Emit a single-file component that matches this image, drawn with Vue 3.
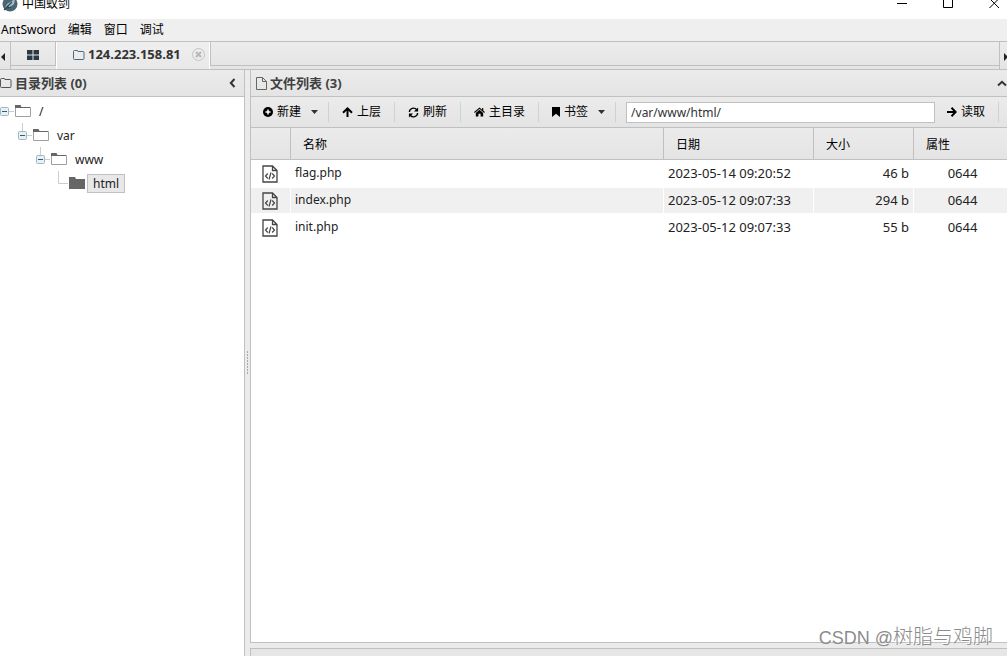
<script setup>
import { ref } from 'vue'

const menus = ['AntSword', '编辑', '窗口', '调试']
const tree = [
  { name: '/', level: 0 },
  { name: 'var', level: 1 },
  { name: 'www', level: 2 },
  { name: 'html', level: 3, leaf: true },
]
const files = [
  { name: 'flag.php', date: '2023-05-14 09:20:52', size: '46 b', attr: '0644' },
  { name: 'index.php', date: '2023-05-12 09:07:33', size: '294 b', attr: '0644' },
  { name: 'init.php', date: '2023-05-12 09:07:33', size: '55 b', attr: '0644' },
]
const path = ref('/var/www/html/')
</script>

<template>
  <div class="window">
    <header class="titlebar">
      <svg class="logo" width="16" height="16" viewBox="0 0 16 16">
        <circle cx="8" cy="8" r="7.5" fill="#4b6673" />
        <path d="M3 12 5 8 10 5 13 3 12 8 8 11z" fill="#a9c0ca" />
        <path d="M2 14 10 6M6 9v3l3-1" stroke="#2c4450" stroke-width="1.2" fill="none" />
      </svg>
      <span class="app-name">中国蚁剑</span>
      <button class="win-btn" aria-label="最小化">
        <svg width="11" height="11" viewBox="0 0 11 11"><path d="M0 5.5h10" stroke="#000" /></svg>
      </button>
      <button class="win-btn" aria-label="最大化">
        <svg width="11" height="11" viewBox="0 0 11 11"><path d="M.5.5h9v9h-9z" stroke="#000" fill="none" /></svg>
      </button>
      <button class="win-btn" aria-label="关闭">
        <svg width="11" height="11" viewBox="0 0 11 11"><path d="M.5.5l9.500 9.500M10 .5.5 10" stroke="#000" fill="none" /></svg>
      </button>
    </header>

    <nav class="menubar">
      <button v-for="m in menus" :key="m">{{ m }}</button>
    </nav>

    <div class="tabs">
      <button class="scroll left" aria-label="向左">
        <svg width="5" height="8" viewBox="0 0 5 8"><path d="M5 0v8L1 4z" fill="#222" /></svg>
      </button>
      <button class="tab home" aria-label="首页">
        <svg width="12" height="10" viewBox="0 0 12 10">
          <path d="M0 0h5.500v4.500H0zM6.500 0H12v4.500H6.500zM0 5.500h5.500V10H0zM6.500 5.500H12V10H6.500z" fill="#2b3a42" />
        </svg>
      </button>
      <div class="tab active">
        <svg width="12" height="10" viewBox="0 0 12 10">
          <path d="M.5 8.500v-7q0-1 1-1h2.500q1 0 1 1h5q1 0 1 1v6q0 1-1 1h-8.500q-1 0-1-1z" stroke="#46697f" fill="none" />
        </svg>
        <span class="tab-label">124.223.158.81</span>
        <button class="close" aria-label="关闭标签">
          <svg width="13" height="13" viewBox="0 0 13 13">
            <circle cx="6.500" cy="6.500" r="6" stroke="#c2c2c2" fill="none" />
            <path d="M4 4l5 5M9 4 4 9" stroke="#b8b8b8" stroke-width="2" />
          </svg>
        </button>
      </div>
      <div class="tab-space"></div>
      <button class="scroll right" aria-label="向右">
        <svg width="3" height="8" viewBox="0 0 3 8"><path d="M0 0v8l3-3V3z" fill="#222" /></svg>
      </button>
    </div>

    <main class="panes">
      <section class="side">
        <div class="pane-head">
          <svg width="12" height="10" viewBox="0 0 12 10">
            <path d="M.5 8.500v-7q0-1 1-1h2.500q1 0 1 1h5q1 0 1 1v6q0 1-1 1h-8.500q-1 0-1-1z" stroke="#555" fill="none" />
          </svg>
          <h2>目录列表 (0)</h2>
          <button class="fold" aria-label="折叠">
            <svg width="7" height="10" viewBox="0 0 7 10"><path d="M5.500 1 1.800 5l3.700 4" stroke="#333" stroke-width="2" fill="none" /></svg>
          </button>
        </div>
        <ul class="tree">
          <li v-for="n in tree" :key="n.name" :class="'level-' + n.level">
            <svg v-if="!n.leaf" class="toggle" width="14" height="24" viewBox="0 0 14 24">
              <path v-if="n.level" d="M4.500 0v8" stroke="#ccc" />
              <path d="M9 12.500h5" stroke="#ccc" />
              <rect x=".5" y="8.500" width="8" height="8" rx="1" fill="#e9f0f4" stroke="#9db8c6" />
              <path d="M2 12.500h5" stroke="#355a70" />
            </svg>
            <svg v-else class="toggle" width="14" height="24" viewBox="0 0 14 24">
              <path d="M4.500 0v12.500H14" stroke="#ccc" fill="none" />
            </svg>
            <svg class="folder" width="16" height="12" viewBox="0 0 16 12">
              <template v-if="n.leaf"><path d="M0 0h6l1 2h9v10H0z" fill="#666" /></template>
              <template v-else>
                <path d="M.5 11.500v-9h15v9z" fill="#fff" stroke="#a0a0a0" />
                <path d="M0 0h5.500l1 2H15v1H0z" fill="#666" />
              </template>
            </svg>
            <span class="node" :class="{ selected: n.leaf }">{{ n.name }}</span>
          </li>
        </ul>
      </section>

      <div class="splitter">
        <svg width="2" height="24" viewBox="0 0 2 24"><path d="M.5 0v24" stroke="#aaa" stroke-dasharray="2 1" /></svg>
      </div>

      <div class="content">
        <section class="files">
          <div class="pane-head">
            <svg width="11" height="13" viewBox="0 0 11 13">
              <path d="M.5.5h6l4 4v8H.5zM6.500.5v4h4" stroke="#666" fill="none" />
            </svg>
            <h2>文件列表 (3)</h2>
            <button class="fold" aria-label="收起">
              <svg width="10" height="7" viewBox="0 0 10 7"><path d="M1 5.500 5 1.800l4 3.700" stroke="#333" stroke-width="2" fill="none" /></svg>
            </button>
          </div>

          <div class="toolbar">
            <button class="tool new">
              <svg width="10" height="10" viewBox="0 0 10 10"><circle cx="5" cy="5" r="5" /><path d="M5 2.500v5M2.500 5h5" stroke="#fff" stroke-width="1.500" /></svg>
              新建
              <svg class="caret" width="7" height="4" viewBox="0 0 7 4"><path d="M0 0h7L3.500 4z" fill="#333" /></svg>
            </button>
            <button class="tool up">
              <svg width="11" height="10" viewBox="0 0 11 10"><path d="M5.500 10V1.500M1 5.700l4.500-4.300L10 5.700" stroke="#000" stroke-width="2" fill="none" /></svg>
              上层
            </button>
            <button class="tool refresh">
              <svg width="11" height="11" viewBox="0 0 12 12">
                <path d="M1.500 5.500A4.500 4.500 0 0 1 9.500 3M10.500 6.500A4.500 4.500 0 0 1 2.500 9" stroke="#000" stroke-width="1.500" fill="none" />
                <path d="M11 .5V5H6.500zM1 11.500V7h4.500z" />
              </svg>
              刷新
            </button>
            <button class="tool main-dir">
              <svg width="11" height="10" viewBox="0 0 12 10"><path d="M6 2.600 10 6v4H7.200V7H4.800v3H2V6z" /><path d="M.5 5.500 6 .8l5.500 4.700M9.500.5v3" stroke="#000" stroke-width="1.200" fill="none" /></svg>
              主目录
            </button>
            <button class="tool bookmark">
              <svg width="8" height="10" viewBox="0 0 8 10"><path d="M0 0h8v10L4 6.800 0 10z" /></svg>
              书签
              <svg class="caret" width="7" height="4" viewBox="0 0 7 4"><path d="M0 0h7L3.500 4z" fill="#333" /></svg>
            </button>
            <input v-model="path" class="path" type="text" aria-label="路径" />
            <button class="tool read">
              <svg width="10" height="10" viewBox="0 0 10 10"><path d="M0 5h8.500M4.500.8 8.600 5 4.500 9.200" stroke="#000" stroke-width="2" fill="none" /></svg>
              读取
            </button>
          </div>

          <table>
            <colgroup>
              <col class="c-icon" /><col /><col class="c-date" /><col class="c-size" /><col class="c-attr" />
            </colgroup>
            <thead>
              <tr><th></th><th>名称</th><th>日期</th><th>大小</th><th>属性</th></tr>
            </thead>
            <tbody>
              <tr v-for="f in files" :key="f.name">
                <td class="icon">
                  <svg width="16" height="18" viewBox="0 0 16 18">
                    <path d="M1 1h9.500L15 5.500V17H1zM10.500 1v4.500H15" stroke="#444" stroke-width="1.300" fill="none" />
                    <path d="M5.800 8.500 3.500 11l2.300 2.500M10.200 8.500l2.300 2.500-2.300 2.500M9 7.500l-2 7" stroke="#444" stroke-width="1.200" fill="none" />
                  </svg>
                </td>
                <td class="name">{{ f.name }}</td>
                <td>{{ f.date }}</td>
                <td class="size">{{ f.size }}</td>
                <td class="attr">{{ f.attr }}</td>
              </tr>
            </tbody>
          </table>
        </section>
        <section class="tasks"></section>
      </div>
    </main>
    <div class="watermark"><span class="site">CSDN @</span>树脂与鸡脚</div>
  </div>
</template>

<style>
body {
  margin: 0;
  overflow: hidden;
}
</style>

<style scoped>
.window {
  position: relative;
  display: flex;
  flex-direction: column;
  height: 100vh;
  overflow: hidden;
  background: #ebebeb;
  color: #222;
  font: 13px/20px "Noto Sans", "Noto Sans CJK SC", sans-serif;
}
button {
  display: flex;
  align-items: center;
  padding: 0;
  border: 0;
  background: none;
  color: #000;
  font: inherit;
  font-size: 12px;
  white-space: nowrap;
}
svg {
  flex: none;
  display: block;
}
.titlebar {
  display: flex;
  flex: none;
  align-items: center;
  height: 31px;
  margin-top: -12px;
  padding-left: 2px;
  background: #fff;
  color: #000;
  font-size: 12px;
}
.app-name {
  margin-left: 4px;
  margin-right: auto;
}
.win-btn {
  justify-content: center;
  width: 46px;
  height: 30px;
}
.win-btn:last-child {
  margin-right: -10px;
}
.menubar {
  display: flex;
  flex: none;
  gap: 12px;
  height: 22px;
  padding-left: 1px;
  background: #efefef;
}
.tabs {
  display: flex;
  flex: none;
  height: 27px;
  border-top: 1px solid #c0c0c0;
  border-bottom: 1px solid #c0c0c0;
  background: linear-gradient(#ececec, #e4e4e4);
}
.scroll {
  width: 10px;
  padding-top: 2px;
  border-right: 1px solid #c0c0c0;
  box-sizing: content-box;
}
.scroll.right {
  justify-content: flex-end;
  width: 7px;
  border-right: 0;
  border-left: 1px solid #c0c0c0;
}
.tab {
  display: flex;
  align-items: center;
}
.home {
  justify-content: center;
  width: 45px;
  height: 24px;
  padding-top: 2px;
  border-right: 1px solid #c0c0c0;
  border-bottom: 1px solid #c0c0c0;
}
.active {
  padding: 0 4px 2px 16px;
  border: solid #fff;
  border-width: 0 1px;
  background: linear-gradient(#efefef, #e8e8e8);
}
.tab-label {
  margin-left: 3px;
  padding-bottom: 2px;
  color: #333;
  font-weight: bold;
}
.close {
  margin-left: 11px;
}
.tab-space {
  flex: 1;
  height: 23px;
  border-bottom: 1px solid #c0c0c0;
  border-left: 1px solid #c0c0c0;
}
.panes {
  display: flex;
  flex: 1;
  min-height: 0;
}
.side {
  flex: none;
  width: 244px;
  border-right: 1px solid #c0c0c0;
  background: #fff;
}
.pane-head {
  display: flex;
  align-items: center;
  height: 26px;
  border-bottom: 1px solid #c0c0c0;
  background: linear-gradient(#ebebeb, #e4e4e4);
}
h2 {
  margin: 0 auto 0 3px;
  color: #404040;
  font-size: 13px;
  line-height: 20px;
}
.fold {
  margin-right: 8px;
}
.tree {
  margin: 0;
  padding: 2px 0 0;
  list-style: none;
}
.tree li {
  display: flex;
  align-items: center;
  height: 24px;
}
.level-1 {
  padding-left: 18px;
}
.level-2 {
  padding-left: 36px;
}
.level-3 {
  padding-left: 54px;
}
.folder {
  margin-left: 1px;
}
.node {
  margin-left: 2px;
  padding: 0 5px;
  border: 1px solid transparent;
  font-size: 12px;
  line-height: 17px;
}
.selected {
  border-color: #c0c0c0;
  background: #e8e8e8;
}
.splitter {
  display: flex;
  flex: none;
  align-items: center;
  width: 3px;
  padding-left: 2px;
}
.content {
  display: flex;
  flex: 1;
  flex-direction: column;
  gap: 5px;
  min-width: 0;
}
.files {
  flex: 1;
  border: solid #c0c0c0;
  border-width: 0 0 1px 1px;
  background: #fff;
}
.files .pane-head {
  padding-left: 5px;
}
.files .fold {
  margin-right: 0;
}
.tasks {
  flex: none;
  height: 7px;
  border: solid #c0c0c0;
  border-width: 1px 0 0 1px;
  background: #e6e6e6;
}
.toolbar {
  display: flex;
  align-items: center;
  height: 30px;
  padding-right: 8px;
  border-bottom: 1px solid #c0c0c0;
  background: linear-gradient(#ebebeb, #e4e4e4);
}
.tool {
  gap: 4px;
  height: 20px;
  padding: 0 13px;
  border-right: 1px solid #c3d5dd;
}
.caret {
  margin-left: 6px;
}
.new,
.bookmark {
  padding-right: 10px;
}
.new,
.read {
  padding-left: 12px;
}
.path {
  flex: 1;
  min-width: 0;
  height: 21px;
  margin-left: 10px;
  padding: 0 4px;
  border: 1px solid #c0c0c0;
  box-sizing: border-box;
  background: #fff;
  color: #333;
  font: 12px "Noto Sans", "Noto Sans CJK SC", sans-serif;
}
table {
  width: 100%;
  border-collapse: separate;
  border-spacing: 0;
  table-layout: fixed;
}
.c-icon {
  width: 40px;
}
.c-date {
  width: 150px;
}
.c-size {
  width: 100px;
}
.c-attr {
  width: 93px;
}
th {
  height: 29px;
  padding: 2px 0 0 12px;
  border-right: 1px solid #c0c0c0;
  border-bottom: 1px solid #c0c0c0;
  background: linear-gradient(#ebebeb, #e4e4e4);
  color: #000;
  font-size: 12px;
  font-weight: normal;
  text-align: left;
}
td {
  height: 23px;
  padding: 0 4px 2px;
  border: 1px solid #fff;
  border-left: 0;
}
th:last-child,
td:last-child {
  border-right: 0;
}
tbody tr:nth-child(even) {
  background: #f0f0f0;
}
.icon {
  padding: 1px 0 1px 11px;
}
.name {
  font-size: 12px;
}
.size {
  text-align: right;
}
.attr {
  padding-right: 0;
  text-align: center;
}
.watermark {
  position: absolute;
  right: 14px;
  bottom: 5px;
  color: #8c8c8c;
  font: 20px/26px "Liberation Sans", "Noto Sans CJK SC", sans-serif;
  font-weight: 300;
  text-shadow: -1px -1px 0 #fff;
}
.site {
  font-size: 18px;
}
</style>
